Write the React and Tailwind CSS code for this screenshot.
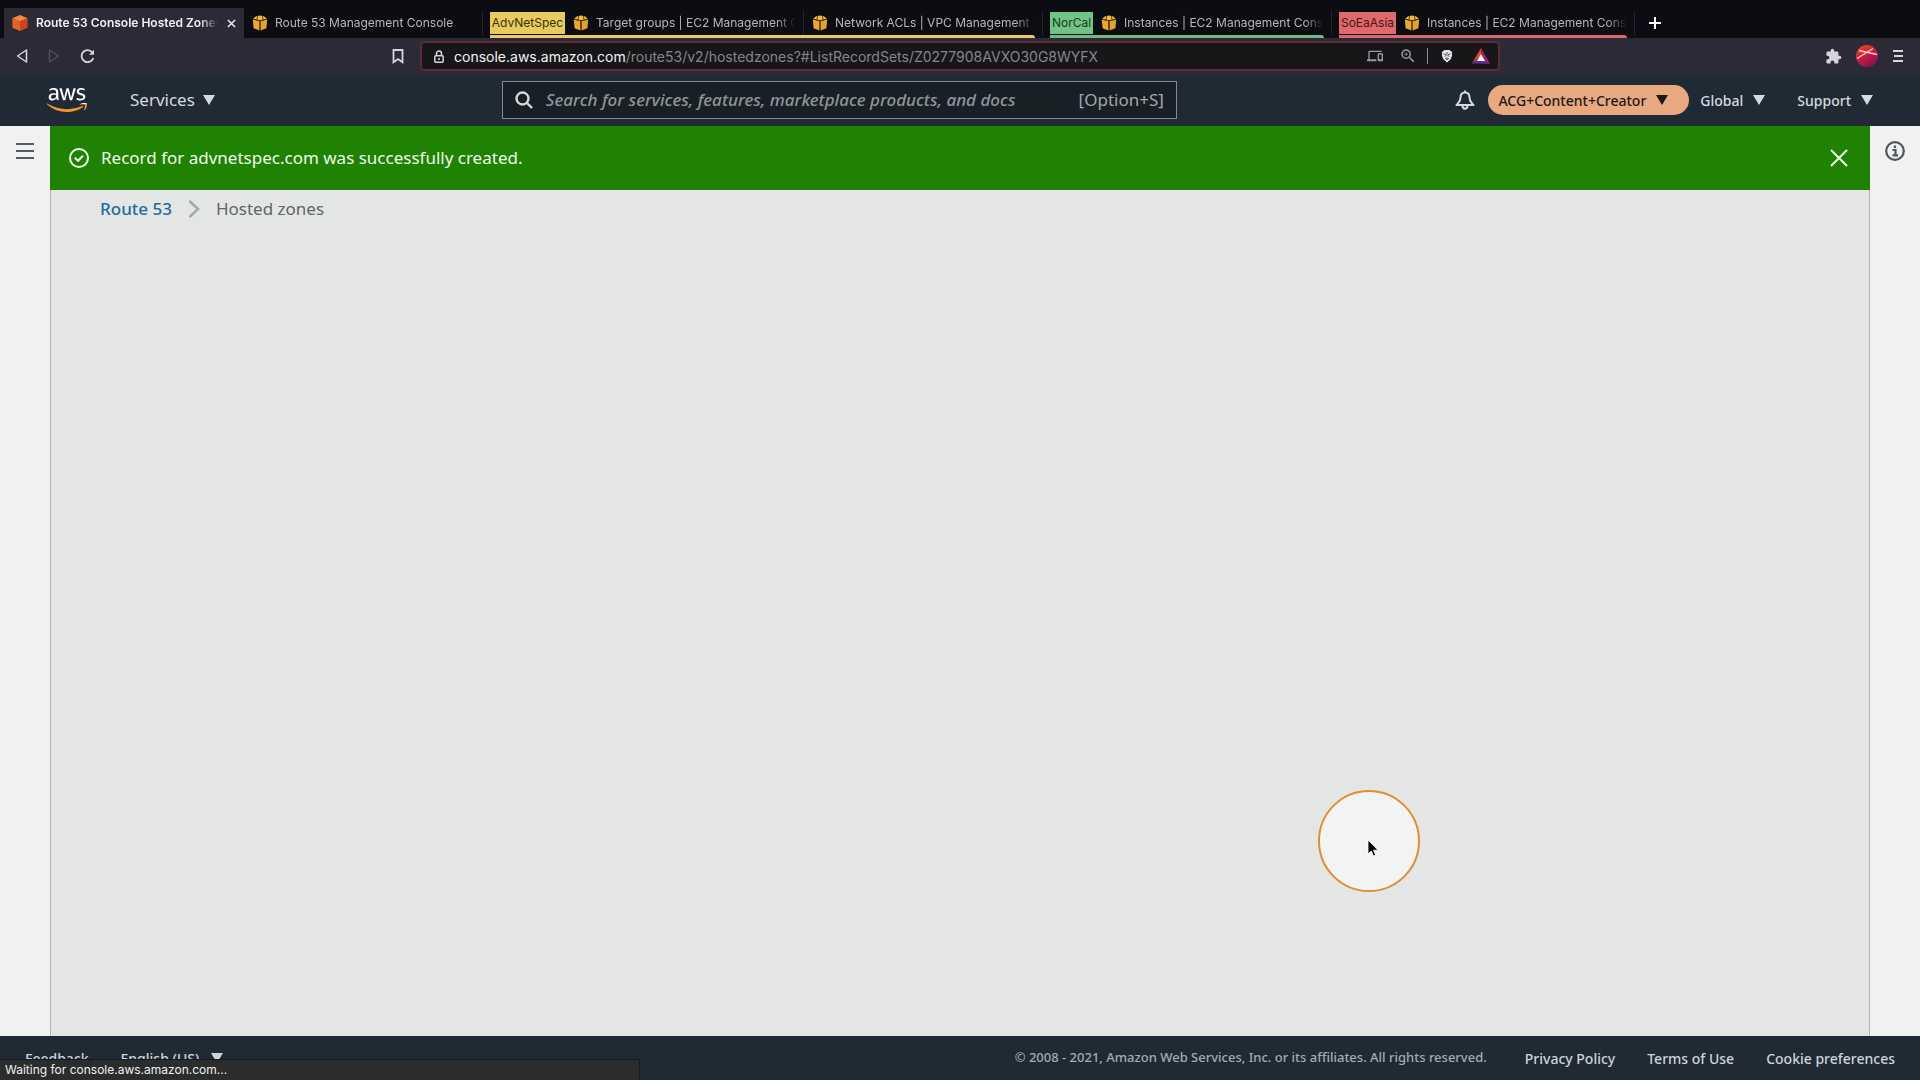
import React from "react";
import { FaAws } from "react-icons/fa";
import { MdExtension, MdOutlineDevices, MdOutlineZoomIn } from "react-icons/md";

function Favicon({ active = false }) {
  if (active) {
    return (
      <svg viewBox="0 0 16 16" className="size-4 shrink-0" aria-hidden="true">
        <path d="M8 0 15.6 3.2 8 6.4 0.4 3.2Z" fill="#f58a3c" />
        <path d="M0.4 3.2 8 6.4V16L0.4 12.8Z" fill="#e8602a" />
        <path d="M15.6 3.2 8 6.4V16l7.6-3.2Z" fill="#d2431b" />
      </svg>
    );
  }
  return (
    <svg viewBox="0 0 16 16" className="size-4 shrink-0" aria-hidden="true">
      <path d="M4 1.2 8 0.4l4 0.8 2.800 2.600L8 5.400 1.200 3.800Z" fill="#f0b840" />
      <path d="M0.800 4.400 7.500 6v9.600L1.600 13.200Z" fill="#eda72c" />
      <path d="M15.200 4.400 8.500 6v9.600l5.900-2.400Z" fill="#e9a228" />
      <path d="M0.800 4.100 8 5.800l7.200-1.700M8 5.800v9.800M5.500 1 5 4.800M10.500 1l.5 3.800" stroke="#53350a" strokeWidth="0.900" fill="none" />
    </svg>
  );
}

const fade = "[mask-image:linear-gradient(to_right,black_90%,transparent)]";

function Tab({ title }) {
  return (
    <button className="flex h-full min-w-0 items-center gap-[7px] pl-2 text-[#b4b6ba]">
      <Favicon />
      <span className={`w-[200px] overflow-hidden text-left whitespace-nowrap ${fade}`}>{title}</span>
      <span className="h-6 w-px bg-[#25262e]" />
    </button>
  );
}

function Group({ name, labelClass, lineClass, children }) {
  return (
    <div className="relative flex h-full items-center pr-[7px]">
      <span className={`flex h-[22px] items-center justify-center ${labelClass}`}>{name}</span>
      {children}
      <span className={`absolute bottom-0 left-0 right-[15px] h-[3px] rounded-tr ${lineClass}`} />
    </div>
  );
}

function Caret() {
  return (
    <svg viewBox="0 0 12 10" className="h-[10px] w-3 shrink-0" fill="currentColor" aria-hidden="true">
      <path d="M0 0h12L6 10Z" />
    </svg>
  );
}

function TabStrip() {
  return (
    <div className="flex h-[38px] items-end bg-[#0c0d13] pl-1 font-[Inter,sans-serif] text-[12px]">
      <div className="flex h-[30px] items-center">
        <button className="flex h-full w-60 items-center gap-2 bg-[#2b2b37] pl-2 font-semibold text-[#f0f0f2]">
          <Favicon active />
          <span className={`w-[182px] overflow-hidden text-left whitespace-nowrap ${fade}`}>Route 53 Console Hosted Zones</span>
          <svg viewBox="0 0 10 10" className="ml-px size-[9px] shrink-0" stroke="currentColor" strokeWidth="1.6" aria-label="Close tab">
            <path d="M1 1l8 8M9 1L1 9" />
          </svg>
        </button>
        <div className="h-full pr-[7px]">
          <Tab title="Route 53 Management Console" />
        </div>
        <Group name="AdvNetSpec" labelClass="w-[75px] bg-[#e8cb5d] text-[#3a3112]" lineClass="bg-[#e8cb6a]">
          <Tab title="Target groups | EC2 Management Console" />
          <Tab title="Network ACLs | VPC Management Console" />
        </Group>
        <Group name="NorCal" labelClass="w-[43px] bg-[#72c387] text-[#153d20]" lineClass="bg-[#72b985]">
          <Tab title="Instances | EC2 Management Console" />
        </Group>
        <Group name="SoEaAsia" labelClass="w-[57px] bg-[#de6a6e] text-[#4c1416]" lineClass="bg-[#d9686e]">
          <Tab title="Instances | EC2 Management Console" />
        </Group>
        <button aria-label="New tab" className="ml-[7px] text-white">
          <svg viewBox="0 0 12 12" className="size-3" stroke="currentColor" strokeWidth="2">
            <path d="M6 0v12M0 6h12" />
          </svg>
        </button>
      </div>
    </div>
  );
}

function Toolbar() {
  return (
    <div className="flex h-[38px] items-center bg-[#2b2b37] pb-[2px] font-[Inter,sans-serif] text-[#d5d6da]">
      <div className="flex flex-1 items-center gap-5 pl-4">
        <button aria-label="Back">
          <svg viewBox="0 0 12 14" className="h-[14px] w-3" fill="none" stroke="currentColor" strokeWidth="1.5" strokeLinejoin="round">
            <path d="M10.500 1v12L1.500 7Z" />
          </svg>
        </button>
        <button aria-label="Forward" className="text-[#50515d]">
          <svg viewBox="0 0 12 14" className="h-[14px] w-3" fill="none" stroke="currentColor" strokeWidth="1.5" strokeLinejoin="round">
            <path d="M1.500 1v12l9-6Z" />
          </svg>
        </button>
        <button aria-label="Reload">
          <svg viewBox="0 0 15 15" className="size-[15px]" fill="none" stroke="currentColor" strokeWidth="1.800">
            <path d="M12.300 3.400A6 6 0 1 0 13.300 8.900" />
            <path d="M14 0.800v5H9Z" fill="currentColor" stroke="none" />
          </svg>
        </button>
        <button aria-label="Bookmark" className="ml-auto mr-4">
          <svg viewBox="0 0 12 15" className="h-[15px] w-3" fill="none" stroke="currentColor" strokeWidth="1.800">
            <path d="M1.500 1h9v12.200L6 10l-4.500 3.200Z" />
          </svg>
        </button>
      </div>
      <div className="flex h-[30px] w-[1080px] items-center rounded-sm border-2 border-[#5e2c35] bg-[#17171a] pl-3 text-[14px]">
        <svg viewBox="0 0 10 13" className="h-[13px] w-[10px]" aria-hidden="true">
          <path d="M2.500 6V3.500a2.500 2.500 0 0 1 5 0V6" fill="none" stroke="#d5d6da" strokeWidth="1.500" />
          <rect x="0.800" y="5.800" width="8.400" height="6.400" rx="1" fill="none" stroke="#d5d6da" strokeWidth="1.500" />
          <rect x="4.200" y="8" width="1.600" height="2" fill="#d5d6da" />
        </svg>
        <p className="ml-[10px] flex-1 whitespace-nowrap text-[#85868b]">
          <span className="text-[#f3f3f5]">console.aws.amazon.com</span>/route53/v2/hostedzones?#ListRecordSets/Z0277908AVXO30G8WYFX
        </p>
        <button aria-label="Send to device" className="mr-4 text-[#9a9ba2]">
          <MdOutlineDevices className="size-4" />
        </button>
        <button aria-label="Zoom" className="mr-[10px] text-[#9a9ba2]">
          <MdOutlineZoomIn className="size-[18px]" />
        </button>
        <span className="h-4 w-px bg-[#8c8d93]" />
        <button aria-label="Brave Shields" className="ml-3">
          <svg viewBox="0 0 14 16" className="h-[14px] w-[14px]">
            <path d="M4 1h6l1.500 1.500 1.500 1-.5 2 .4 1.500-1.700 4.800L7 15.300 2.800 11.800 1.100 7l.4-1.500-.5-2 1.500-1Z" fill="#e6e6ea" />
            <path d="M3 5.500l2.500.8L6 7.500 4.500 8.500M11 5.500l-2.500.8L8 7.500l1.500 1M5.200 11 7 10l1.800 1L7 12.400ZM7 3.500v3" fill="none" stroke="#2a2a33" strokeWidth="0.900" />
          </svg>
        </button>
        <button aria-label="Brave Rewards" className="ml-[18px] mr-2">
          <svg viewBox="0 0 18 16" className="h-4 w-[18px]">
            <path d="M9 0 18 15.500H9Z" fill="#9e1f63" />
            <path d="M9 0v8L4.500 12 0 15.500Z" fill="#e8412a" />
            <path d="M0 15.500 5 11.500h8l5 4Z" fill="#662d91" />
            <path d="M9 6l4 7H5Z" fill="#fff" />
          </svg>
        </button>
      </div>
      <div className="flex flex-1 items-center justify-end gap-[14px] pr-4">
        <button aria-label="Extensions">
          <MdExtension className="size-[17px]" />
        </button>
        <button aria-label="Profile">
          <svg viewBox="0 0 22 22" className="size-[22px]">
            <defs>
              <linearGradient id="avatar" x1="0" y1="0" x2="0.600" y2="1">
                <stop offset="0" stopColor="#e8502c" />
                <stop offset="0.500" stopColor="#d0203a" />
                <stop offset="1" stopColor="#8a1250" />
              </linearGradient>
            </defs>
            <circle cx="11" cy="11" r="11" fill="url(#avatar)" />
            <path d="M3 5.500 21 9.500M1 13.500 17 3.500" stroke="#f6d0cc" strokeWidth="1.300" />
          </svg>
        </button>
        <button aria-label="Menu">
          <svg viewBox="0 0 12 14" className="h-[14px] w-3" stroke="currentColor" strokeWidth="1.800">
            <path d="M1 2h10M2 7h9M1 12h10" />
          </svg>
        </button>
      </div>
    </div>
  );
}

function AwsHeader() {
  return (
    <header className="flex h-[50px] items-center bg-[#202a35] pb-[2px] text-[17px] text-[#d5dade]">
      <svg className="absolute size-0" aria-hidden="true">
        <linearGradient id="aws" gradientUnits="userSpaceOnUse" x1="0" y1="0" x2="0" y2="512">
          <stop offset="0.622" stopColor="#ffffff" />
          <stop offset="0.622" stopColor="#f2952f" />
        </linearGradient>
      </svg>
      <a href="#home" aria-label="AWS" className="ml-[47px]">
        <FaAws className="h-8 w-10" fill="url(#aws)" />
      </a>
      <button className="ml-[43px] flex items-center gap-2">
        Services <Caret />
      </button>
      <label className="ml-[287px] flex h-[38px] w-[675px] items-center border border-[#848a92] bg-[#191f26] px-3">
        <svg viewBox="0 0 18 18" className="size-[18px] shrink-0" fill="none" stroke="#d5dbdb" strokeWidth="2.400">
          <circle cx="7.500" cy="7.500" r="6" />
          <path d="M12 12l5 5" />
        </svg>
        <input
          aria-label="Search"
          className="ml-[13px] min-w-0 flex-1 bg-transparent font-medium italic outline-none placeholder:text-[#8d959c]"
          placeholder="Search for services, features, marketplace products, and docs"
        />
        <span className="text-[#a0a7ad]">[Option+S]</span>
      </label>
      <nav className="ml-auto flex items-center pr-[47px] text-[14px] font-medium">
        <button aria-label="Notifications" className="mr-[13px]">
          <svg viewBox="0 0 20 20" className="size-5" fill="none" stroke="currentColor" strokeWidth="2" strokeLinejoin="round">
            <path d="M10 0.500v2M10 2.500c-3 0-4.500 2-4.500 5 0 4-1.500 4.500-4 7.500h17c-2.500-3-4-3.500-4-7.500 0-3-1.500-5-4.500-5Z" />
            <path d="M7.500 15.500c0 4.200 5 4.200 5 0" />
          </svg>
        </button>
        <button className="flex h-[30px] items-center gap-[10px] rounded-full bg-[#e8a880] pl-[10px] pr-[21px] text-[#1b1a19]">
          ACG+Content+Creator <Caret />
        </button>
        <button className="ml-[11px] flex items-center gap-[10px]">
          Global <Caret />
        </button>
        <button className="ml-8 flex items-center gap-[10px]">
          Support <Caret />
        </button>
      </nav>
    </header>
  );
}

function Main() {
  return (
    <div className="flex flex-1 bg-[#f1f1f1] text-[17px]">
      <aside className="flex w-[50px] justify-center pt-4">
        <button aria-label="Open navigation" className="h-fit text-[#545b64]">
          <svg viewBox="0 0 18 18" className="size-[18px]" stroke="currentColor" strokeWidth="2">
            <path d="M0 2h18M0 9h18M0 16h18" />
          </svg>
        </button>
      </aside>
      <main className="flex-1 border-x border-[#b4b7b9] bg-[#e3e6e5]">
        <div role="status" className="-mx-px flex h-16 items-center bg-[#208203] pl-[19px] pr-[22px] text-[#effcec]">
          <svg viewBox="0 0 20 20" className="size-5" fill="none" stroke="currentColor" strokeWidth="2">
            <circle cx="10" cy="10" r="9" />
            <path d="M5.800 9.800 9 12.800l5-5" />
          </svg>
          <p className="ml-3 flex-1">Record for advnetspec.com was successfully created.</p>
          <button aria-label="Dismiss">
            <svg viewBox="0 0 18 18" className="size-[18px]" stroke="currentColor" strokeWidth="2">
              <path d="M1 1l16 16M17 1L1 17" />
            </svg>
          </button>
        </div>
        <nav aria-label="Breadcrumb" className="flex items-center pl-[49px] pt-[6px]">
          <a href="#route53" className="font-medium text-[#1f6ba0]">Route 53</a>
          <svg viewBox="0 0 12 18" className="mx-4 h-[18px] w-3" fill="none" stroke="#a3a8aa" strokeWidth="2.500" aria-hidden="true">
            <path d="M1.500 1 10 9l-8.500 8" />
          </svg>
          <span className="text-[#5f656b]">Hosted zones</span>
        </nav>
      </main>
      <aside className="flex w-[50px] justify-center pt-[15px]">
        <button aria-label="Info" className="h-fit text-[#50565c]">
          <svg viewBox="0 0 20 20" className="size-5" fill="none" stroke="currentColor" strokeWidth="2.200">
            <circle cx="10" cy="10" r="8.800" />
            <path d="M10 4.500v2.500M7.500 9H10.500v5M7.500 14.300h5.500" />
          </svg>
        </button>
      </aside>
    </div>
  );
}

function Footer() {
  return (
    <footer className="relative flex h-11 items-center bg-[#202a35] px-[25px] text-[14px] font-medium text-[#ced3d9]">
      <a href="#feedback">Feedback</a>
      <button className="ml-8 flex items-center gap-3">
        English (US) <Caret />
      </button>
      <p className="ml-auto text-[13px] text-[#a3abb3]">© 2008 - 2021, Amazon Web Services, Inc. or its affiliates. All rights reserved.</p>
      <a href="#privacy" className="ml-[38px]">Privacy Policy</a>
      <a href="#terms" className="ml-8">Terms of Use</a>
      <a href="#cookies" className="ml-8">Cookie preferences</a>
      <div className="absolute bottom-0 left-0 flex h-[21px] w-1/3 items-center border-r border-t border-[#17191c] bg-[#2b2c2c] pl-[5px] font-[Inter,sans-serif] text-[12px] font-normal text-[#f0f0f0]">
        Waiting for console.aws.amazon.com...
      </div>
    </footer>
  );
}

function Pointer() {
  return (
    <div className="pointer-events-none absolute left-[1318px] top-[790px] flex size-[102px] items-center justify-center rounded-full border-2 border-[#df8f2f] bg-[#f2f4f3]">
      <svg viewBox="0 0 12 18" className="ml-2 mt-[14px] h-[18px] w-3">
        <path d="M1 1v14l3.300-3 2.200 5 2.200-1-2.200-4.800H11Z" fill="#000" stroke="#fff" strokeWidth="0.800" />
      </svg>
    </div>
  );
}

export default function App() {
  return (
    <div className="relative flex min-h-screen flex-col overflow-hidden font-['Noto_Sans',sans-serif]">
      <TabStrip />
      <Toolbar />
      <AwsHeader />
      <Main />
      <Footer />
      <Pointer />
    </div>
  );
}
